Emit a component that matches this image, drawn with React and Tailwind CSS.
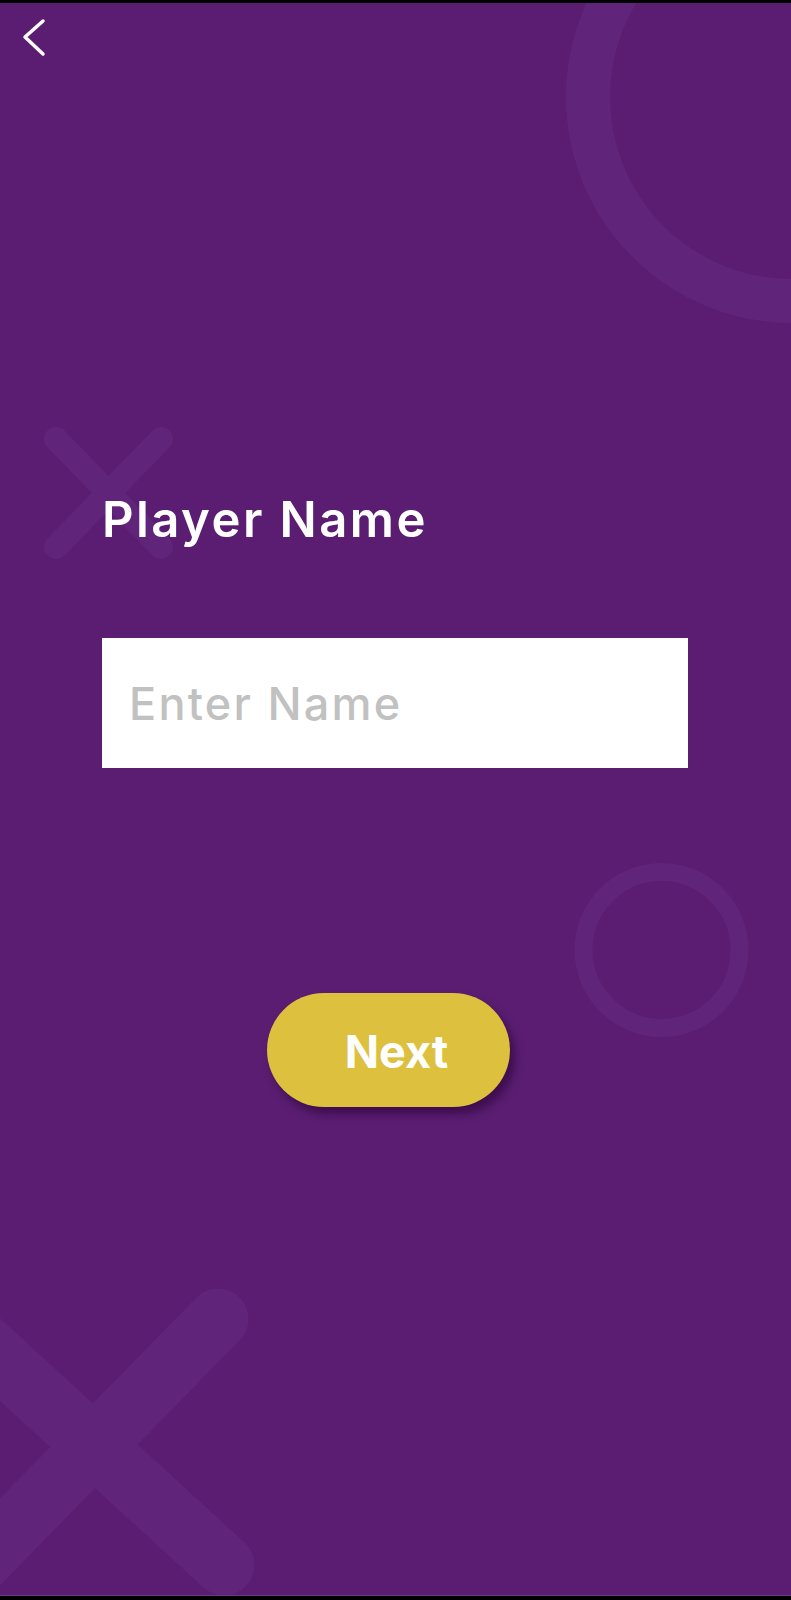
import React, { useState } from 'react';

const Backdrop = () => (
  <svg
    className="absolute inset-0 pointer-events-none"
    width="791"
    height="1593"
    viewBox="0 3 791 1593"
    fill="none"
  >
    <g stroke="#60247a" strokeLinecap="round">
      {/* big ring, top right */}
      <circle cx="792" cy="97" r="204" strokeWidth="44" />
      {/* small ring, right of the button */}
      <circle cx="661.5" cy="950" r="78" strokeWidth="18" />
      {/* small cross behind the title */}
      <line x1="56" y1="439" x2="161" y2="547" strokeWidth="24" />
      <line x1="161" y1="439" x2="56" y2="547" strokeWidth="24" />
      {/* big cross, bottom left */}
      <line x1="-114" y1="1255" x2="224" y2="1565" strokeWidth="61" />
      <line x1="218" y1="1319" x2="-102" y2="1646" strokeWidth="61" />
    </g>
  </svg>
);

const App = () => {
  const [name, setName] = useState('');

  return (
    <div className="w-[791px] h-[1600px] bg-black flex flex-col" style={{ fontFamily: 'Inter, "Noto Sans", sans-serif' }}>
      <div className="h-[3px] shrink-0" />
      <main className="relative h-[1592px] shrink-0 bg-[#5a1d72] overflow-hidden flex flex-col">
        <Backdrop />

        <div className="relative flex flex-col">
          <button className="mt-[15px] ml-[20px] w-[28px] h-[40px] text-white" aria-label="Back">
            <svg width="28" height="40" viewBox="0 0 28 40" fill="none">
              <polyline
                points="23,3 5,19 23,36"
                stroke="currentColor"
                strokeWidth="3.5"
                strokeLinecap="round"
                strokeLinejoin="round"
              />
            </svg>
          </button>

          <h1 className="mt-[432px] ml-[102px] text-[49px] leading-[60px] font-semibold text-white tracking-[0.05em]">
            Player Name
          </h1>

          <input
            value={name}
            onChange={(e) => setName(e.target.value)}
            placeholder="Enter Name"
            className="mt-[88px] ml-[102px] w-[586px] h-[130px] bg-white pl-[27px] text-[45px] font-medium tracking-[0.05em] text-gray-800 placeholder:text-[#c1c1c1] outline-none"
          />

          <button className="mt-[225px] ml-[267px] w-[243px] h-[114px] rounded-full bg-[#dcc03e] shadow-[5px_7px_8px_rgba(40,0,50,0.55)] pl-[16px] pt-[4px] text-[45px] font-bold text-white">
            Next
          </button>
        </div>
      </main>
      <div className="h-px shrink-0 bg-[#6b3a82]" />
    </div>
  );
};

export default App;
